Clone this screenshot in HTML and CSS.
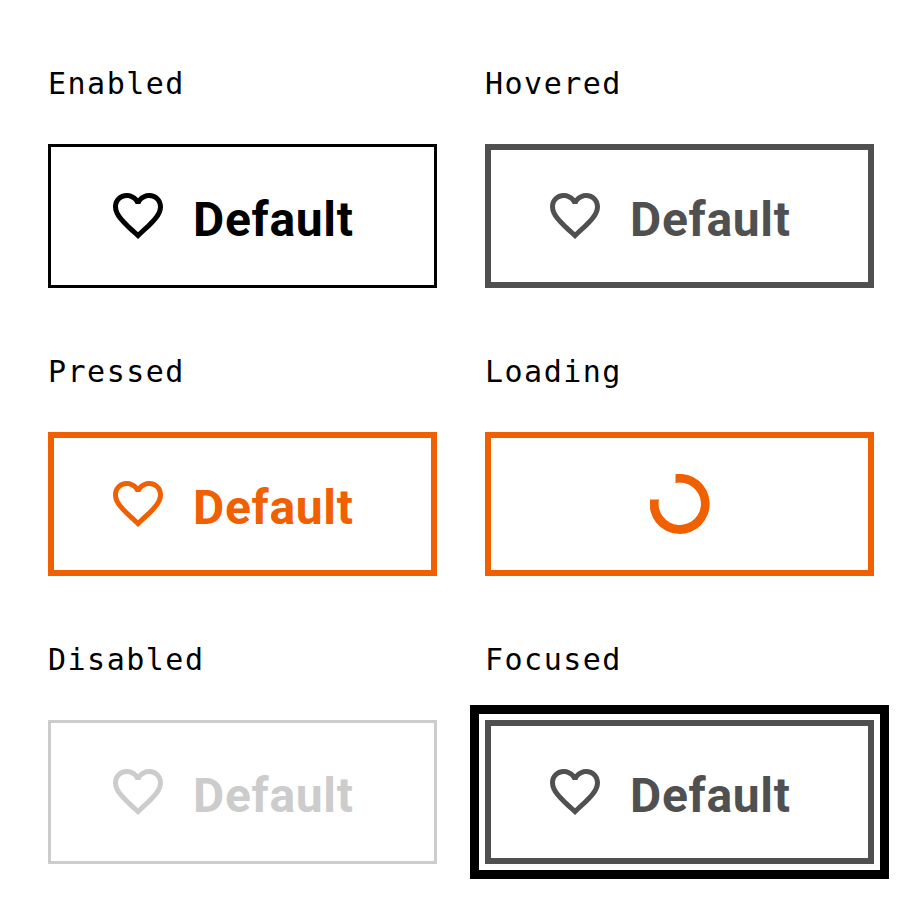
FILE: index.html
```html
<!DOCTYPE html>
<html lang="en">
<head>
<meta charset="utf-8">
<title>Button states</title>
<link rel="stylesheet" href="styles.css">
</head>
<body>
<svg width="0" height="0" class="defs"><symbol id="heart" viewBox="2 3 20 18.4"><path fill="currentColor" d="M16.5 3c-1.74 0-3.41.81-4.5 2.09C10.91 3.81 9.24 3 7.5 3 4.42 3 2 5.42 2 8.5c0 3.78 3.4 6.86 8.55 11.54L12 21.35l1.45-1.32C18.6 15.36 22 12.28 22 8.5 22 5.42 19.58 3 16.5 3zm-4.4 15.55l-.1.1-.1-.1C7.14 14.24 4 11.39 4 8.5 4 6.5 5.5 5 7.5 5c1.54 0 3.04.99 3.57 2.36h1.87C13.46 5.99 14.96 5 16.5 5c2 0 3.5 1.5 3.5 3.5 0 2.89-3.14 5.74-7.9 10.05z"/></symbol></svg>
<main class="grid">
<section><h2>Enabled</h2><button class="btn"><svg class="icon"><use href="#heart"/></svg><span>Default</span></button></section>
<section><h2>Hovered</h2><button class="btn hovered"><svg class="icon"><use href="#heart"/></svg><span>Default</span></button></section>
<section><h2>Pressed</h2><button class="btn pressed"><svg class="icon"><use href="#heart"/></svg><span>Default</span></button></section>
<section><h2>Loading</h2><button class="btn loading" aria-label="Loading"><svg class="spinner" viewBox="0 0 60 60"><path d="M25.5 .2A30 30 0 1 1 0 25.5H9A21.2 21.2 0 1 0 25.5 9Z" fill="currentColor"/></svg></button></section>
<section><h2>Disabled</h2><button class="btn disabled" disabled><svg class="icon"><use href="#heart"/></svg><span>Default</span></button></section>
<section><h2>Focused</h2><button class="btn hovered focused"><svg class="icon"><use href="#heart"/></svg><span>Default</span></button></section>
</main>
</body>
</html>
```
FILE: styles.css
```css
* { box-sizing: border-box; }
body { margin: 0; min-height: 912px; background: #fff; color: #000; }
.defs { display: block; }
.grid { display: grid; grid-template-columns: 389px 389px; grid-auto-rows: 288px; column-gap: 48px; padding: 0 48px; }
section { display: flex; flex-direction: column; }
h2 { margin: 0; padding-top: 61px; height: 144px; font: 400 30px/46px "DejaVu Sans Mono", monospace; letter-spacing: 1.5px; }
.btn { display: flex; align-items: center; width: 389px; height: 144px; padding: 0 0 0 62px; margin: 0; border: 3px solid currentColor; background: #fff; color: #000; font: 700 48px/60px Roboto, sans-serif; letter-spacing: 0.7px; }
.icon { width: 50px; height: 46px; margin-right: 30px; flex: none; }
.btn span { padding-top: 8px; }
.hovered { color: #505050; border-width: 6px; padding-left: 59px; }
.pressed, .loading { color: #f16000; border-width: 6px; padding-left: 59px; }
.loading { justify-content: center; padding: 0; }
.spinner { width: 60px; height: 60px; }
.disabled { color: #ccc; }
.focused { outline: 9px solid #000; outline-offset: 6px; }
```
